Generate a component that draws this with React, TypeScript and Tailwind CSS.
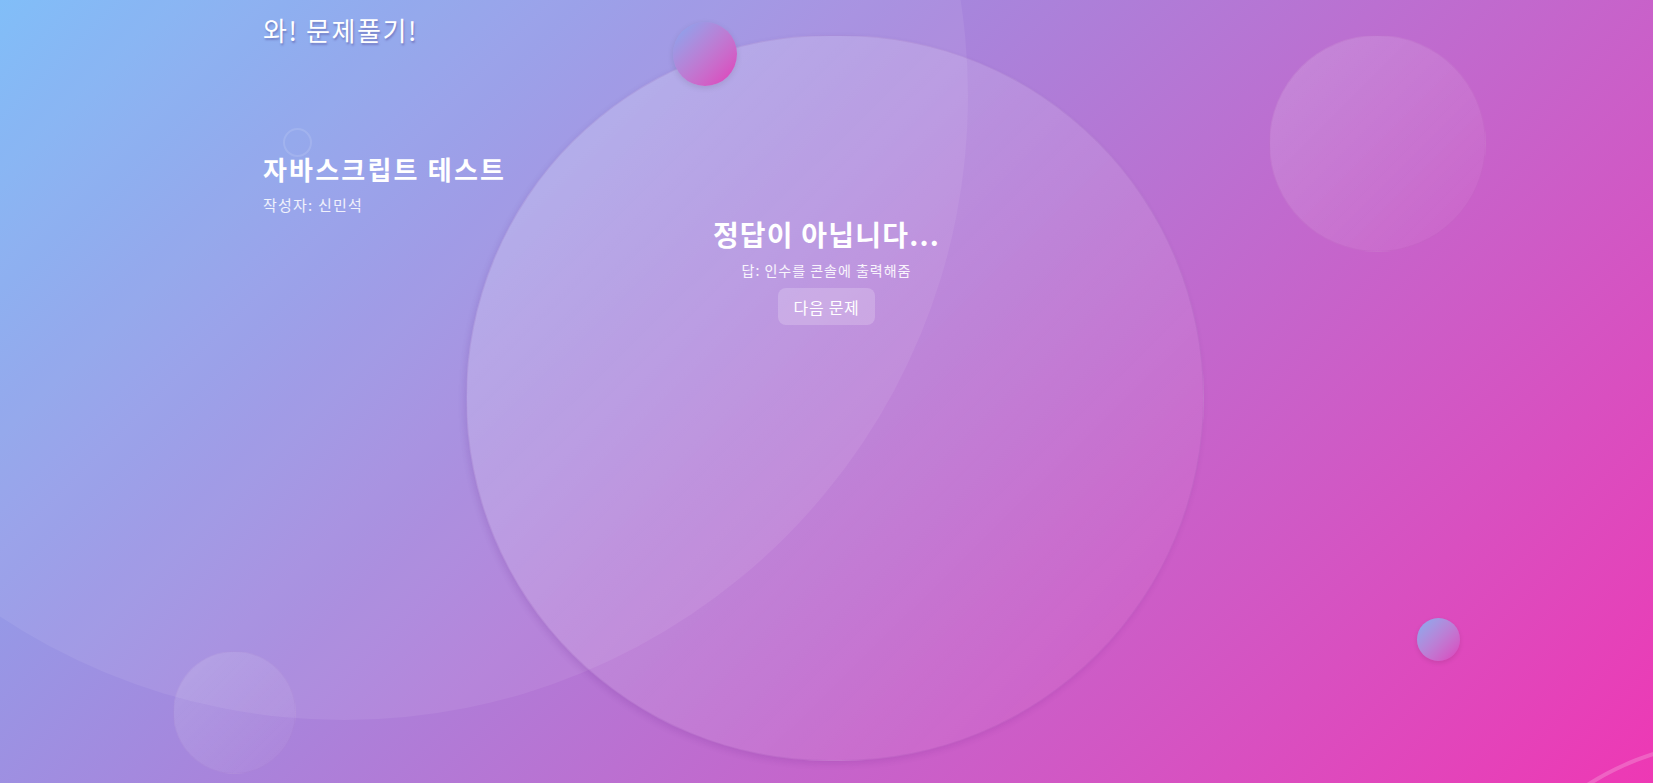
import React from "react";

const font = { fontFamily: '"Noto Sans CJK KR", "Noto Sans", sans-serif' };

export default function App() {
  return (
    <div
      className="relative w-full h-[783px] overflow-hidden bg-[linear-gradient(135deg,#78b9f7,#ee38b4)] text-white"
      style={font}
    >
      {/* background decorations */}
      <div className="absolute left-[-280px] top-[-528px] w-[1248px] h-[1248px] rounded-full bg-white/[0.07]" />
      <div className="absolute left-[466px] top-[35px] w-[738px] h-[726px] rounded-full bg-gradient-to-br from-white/[0.22] to-white/[0.02] border border-[#7a3a9a]/[0.12] shadow-[-2px_3px_6px_rgba(80,20,120,0.12)]" />
      <div className="absolute left-[1269px] top-[35px] w-[217px] h-[217px] rounded-full bg-gradient-to-br from-white/[0.17] to-white/[0.03] border border-[#a0309a]/[0.1]" />
      <div className="absolute left-[173px] top-[651px] w-[123px] h-[123px] rounded-full bg-gradient-to-br from-white/[0.15] to-white/[0.03] border border-[#7a3a9a]/[0.06]" />
      <div className="absolute left-[283px] top-[128px] w-[29px] h-[29px] rounded-full border-2 border-white/[0.12]" />
      <div className="absolute left-[673px] top-[22px] w-[64px] h-[64px] rounded-full bg-gradient-to-br from-[#7ea9f0] to-[#e136b8] shadow-[0_2px_6px_rgba(0,0,0,0.1)]" />
      <div className="absolute left-[1417px] top-[618px] w-[43px] h-[43px] rounded-full bg-gradient-to-br from-[#80aef0] to-[#dc3cbc] shadow-[0_2px_5px_rgba(0,0,0,0.1)]" />
      <div className="absolute left-[1452px] top-[738px] w-[580px] h-[580px] rounded-full border-4 border-white/20" />

      {/* content */}
      <div className="relative flex flex-col">
        <header className="pl-[263px] pt-[12px]">
          <h1 className="text-[26px] font-normal leading-[36px] tracking-[1.6px] [text-shadow:1px_2px_2px_rgba(60,40,120,0.35)]">
            와! 문제풀기!
          </h1>
        </header>

        <section className="pl-[263px] mt-[103px] flex flex-col gap-[7px]">
          <h2 className="text-[26px] font-bold leading-[36px] tracking-[2.2px]">자바스크립트 테스트</h2>
          <p className="text-[15px] text-white/85 leading-[22px] tracking-[1.2px]">작성자: 신민석</p>
        </section>

        <main className="flex flex-col items-center -mt-[2px]">
          <h3 className="text-[28px] font-bold leading-[40px] tracking-[1.2px]">정답이 아닙니다...</h3>
          <p className="mt-[6px] text-[14px] text-white/90 leading-[20px] tracking-[1px]">답: 인수를 콘솔에 출력해줌</p>
          <button className="mt-[8px] h-[37px] px-4 rounded-lg bg-white/20 text-[16px] text-white leading-none tracking-[0.7px]">
            다음 문제
          </button>
        </main>
      </div>
    </div>
  );
}
